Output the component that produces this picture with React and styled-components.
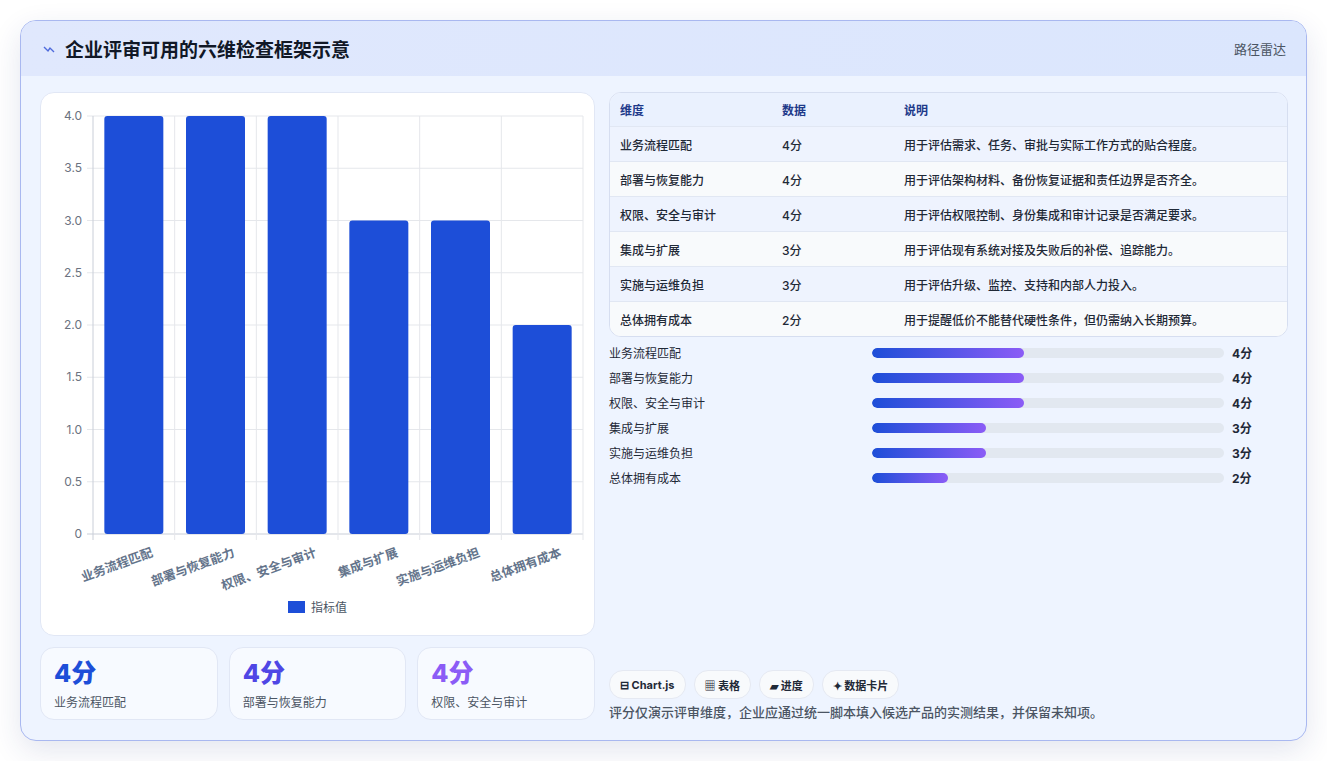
import React from 'react';
import styled, { createGlobalStyle } from 'styled-components';

const Global = createGlobalStyle`
  body { margin: 0; background: #fff; font-family: Inter, "Noto Sans CJK SC", sans-serif; }
`;

const Page = styled.div`
  padding: 20px 20px 20px 20px;
  width: 1327px;
  box-sizing: border-box;
`;

const Frame = styled.div`
  width: 1287px;
  height: 721px;
  box-sizing: border-box;
  border: 1px solid #a9b8f0;
  border-radius: 16px;
  background: #eef4ff;
  overflow: hidden;
  box-shadow: 0 10px 30px rgba(30, 50, 120, 0.12);
  display: flex;
  flex-direction: column;
`;

const Header = styled.div`
  height: 55px;
  background: linear-gradient(90deg, #e0e8fd, #dbe6fd);
  display: flex;
  align-items: center;
  justify-content: space-between;
  padding: 0 20px 0 22px;
`;

const Title = styled.h1`
  margin: 0;
  font-size: 19px;
  font-weight: 700;
  color: #111827;
  display: flex;
  align-items: center;
  gap: 10px;
`;

const Tag = styled.span`
  font-size: 13px;
  color: #4b5563;
`;

const Body = styled.div`
  flex: 1;
  display: grid;
  grid-template-columns: 555px 679px;
  gap: 14px;
  padding: 16px 19px 0 19px;
`;

const Col = styled.div`
  display: flex;
  flex-direction: column;
  gap: 11px;
`;

const ChartCard = styled.div`
  height: 544px;
  background: #fff;
  border: 1px solid #e1e7f5;
  border-radius: 14px;
  box-sizing: border-box;
`;

const Stats = styled.div`
  display: grid;
  grid-template-columns: repeat(3, 1fr);
  gap: 11px;
`;

const Stat = styled.div`
  height: 73px;
  box-sizing: border-box;
  background: #f7faff;
  border: 1px solid #e1e7f5;
  border-radius: 14px;
  padding: 10px 13px;
`;

const StatValue = styled.div`
  font-size: 25px;
  font-weight: 800;
  color: ${p => p.$color};
  line-height: 30px;
`;

const StatLabel = styled.div`
  font-size: 12px;
  color: #4b5563;
  margin-top: 5px;
`;

const Table = styled.div`
  border: 1px solid #d6def0;
  border-radius: 12px;
  overflow: hidden;
  background: #fff;
`;

const Row = styled.div`
  display: grid;
  grid-template-columns: 162px 122px 1fr;
  align-items: center;
  height: ${p => (p.$head ? 33 : 35)}px;
  padding-left: 10px;
  font-size: 12px;
  font-weight: ${p => (p.$head ? 700 : 500)};
  color: ${p => (p.$head ? '#1e3a8a' : '#1f2937')};
  background: ${p => (p.$head ? '#eaf1fe' : p.$alt ? '#f8fafc' : '#eef3fe')};
  border-top: ${p => (p.$head ? 'none' : '1px solid #e1e7f3')};
  box-sizing: border-box;
`;

const Bars = styled.div`
  display: flex;
  flex-direction: column;
  gap: 9px;
  margin-top: 7px;
`;

const BarRow = styled.div`
  display: grid;
  grid-template-columns: 255px 352px 1fr;
  column-gap: 8px;
  align-items: center;
  height: 16px;
  font-size: 12px;
  color: #1f2937;
`;

const Track = styled.div`
  height: 10px;
  border-radius: 5px;
  background: #e2e8f0;
  overflow: hidden;
`;

const Fill = styled.div`
  height: 100%;
  border-radius: 5px;
  background: linear-gradient(90deg, #1d4ed8, #8b5cf6);
`;

const BarValue = styled.span`
  font-weight: 700;
  font-size: 12px;
`;

const Spacer = styled.div`
  flex: 1;
`;

const Chips = styled.div`
  display: flex;
  gap: 8px;
`;

const Chip = styled.span`
  height: 27px;
  padding: 0 10px;
  border-radius: 14px;
  background: #f8fafc;
  border: 1px solid #e5e9f2;
  display: flex;
  align-items: center;
  gap: 4px;
  font-size: 11px;
  font-weight: 700;
  color: #1f2937;
`;

const Note = styled.p`
  margin: 3px 0 19px;
  font-size: 13px;
  font-weight: 500;
  color: #4b5563;
`;

const data = [
  ['业务流程匹配', 4, '用于评估需求、任务、审批与实际工作方式的贴合程度。'],
  ['部署与恢复能力', 4, '用于评估架构材料、备份恢复证据和责任边界是否齐全。'],
  ['权限、安全与审计', 4, '用于评估权限控制、身份集成和审计记录是否满足要求。'],
  ['集成与扩展', 3, '用于评估现有系统对接及失败后的补偿、追踪能力。'],
  ['实施与运维负担', 3, '用于评估升级、监控、支持和内部人力投入。'],
  ['总体拥有成本', 2, '用于提醒低价不能替代硬性条件，但仍需纳入长期预算。'],
];

function Chart() {
  const x0 = 52, x1 = 542, yTop = 23, yBot = 441;
  const step = (x1 - x0) / 6;
  const unit = (yBot - yTop) / 4;
  const ticks = [0, 0.5, 1, 1.5, 2, 2.5, 3, 3.5, 4];
  return (
    <svg width="554" height="542" style={{ display: 'block' }}>
      {ticks.map(t => {
        const y = yBot - t * unit;
        return (
          <g key={t}>
            <line x1={x0 - 6} x2={x1} y1={y} y2={y} stroke={t === 0 ? '#c9ced8' : '#e5e7eb'} />
            <text x={x0 - 11} y={y + 4} fontSize="12" fill="#6b7280" textAnchor="end" fontFamily="Inter, sans-serif">
              {t === 0 ? '0' : t.toFixed(1)}
            </text>
          </g>
        );
      })}
      {[0, 1, 2, 3, 4, 5, 6].map(i => (
        <line key={i} x1={x0 + i * step} x2={x0 + i * step} y1={yTop} y2={yBot + 6} stroke={i === 0 ? '#c9ced8' : '#e5e7eb'} />
      ))}
      {data.map(([name, v], i) => {
        const cx = x0 + step * (i + 0.5);
        return (
          <g key={name}>
            <rect x={cx - 29.5} y={yBot - v * unit} width="59" height={v * unit} rx="3" fill="#1d4ed8" />
            <text
              transform={`translate(${cx + 20} ${yBot + 22}) rotate(-20)`}
              fontSize="12.5"
              fontWeight="600"
              fill="#64748b"
              textAnchor="end"
              fontFamily="'Noto Sans CJK SC', sans-serif"
            >
              {name}
            </text>
          </g>
        );
      })}
      <rect x="247" y="508" width="17" height="12" fill="#1d4ed8" />
      <text x="270" y="519" fontSize="12" fill="#4b5563" fontFamily="'Noto Sans CJK SC', sans-serif">指标值</text>
    </svg>
  );
}

const statColors = ['#1d4ed8', '#4f46e5', '#8b5cf6'];

export default function App() {
  return (
    <Page>
      <Global />
      <Frame>
        <Header>
          <Title>
            <svg width="12" height="8" viewBox="0 0 12 8">
              <path d="M1 2 L5 6 L7 3 L11 7" stroke="#4f6bdc" strokeWidth="1.4" fill="none" />
            </svg>
            企业评审可用的六维检查框架示意
          </Title>
          <Tag>路径雷达</Tag>
        </Header>
        <Body>
          <Col>
            <ChartCard>
              <Chart />
            </ChartCard>
            <Stats>
              {data.slice(0, 3).map(([name, v], i) => (
                <Stat key={name}>
                  <StatValue $color={statColors[i]}>{v}分</StatValue>
                  <StatLabel>{name}</StatLabel>
                </Stat>
              ))}
            </Stats>
          </Col>
          <Col style={{ gap: 0 }}>
            <Table>
              <Row $head>
                <span>维度</span>
                <span>数据</span>
                <span>说明</span>
              </Row>
              {data.map(([name, v, desc], i) => (
                <Row key={name} $alt={i % 2 === 1}>
                  <span>{name}</span>
                  <span>{v}分</span>
                  <span>{desc}</span>
                </Row>
              ))}
            </Table>
            <Bars>
              {data.map(([name, v]) => (
                <BarRow key={name}>
                  <span>{name}</span>
                  <Track>
                    <Fill style={{ width: `${v * 10.8}%` }} />
                  </Track>
                  <BarValue>{v}分</BarValue>
                </BarRow>
              ))}
            </Bars>
            <Spacer />
            <Chips>
              <Chip>⊟ Chart.js</Chip>
              <Chip>▦ 表格</Chip>
              <Chip>▰ 进度</Chip>
              <Chip>✦ 数据卡片</Chip>
            </Chips>
            <Note>评分仅演示评审维度，企业应通过统一脚本填入候选产品的实测结果，并保留未知项。</Note>
          </Col>
        </Body>
      </Frame>
    </Page>
  );
}
